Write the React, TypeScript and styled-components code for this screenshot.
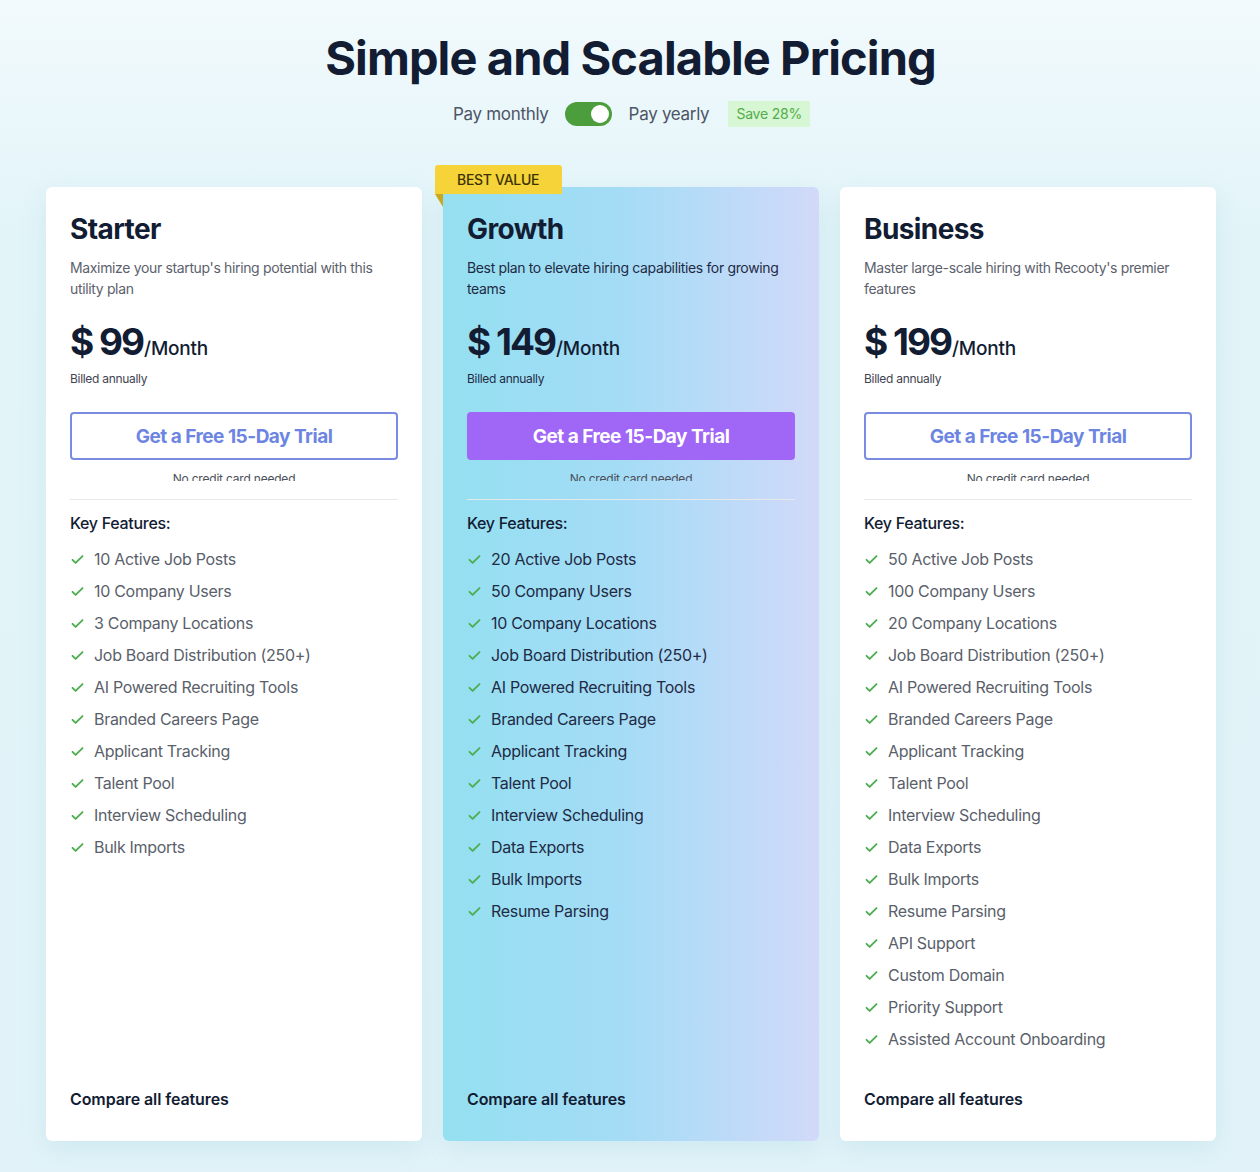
import React from "react";
import styled, { createGlobalStyle } from "styled-components";

const GlobalStyle = createGlobalStyle`
  html, body {
    margin: 0;
    padding: 0;
  }
  body {
    font-family: Inter, "Open Sans", sans-serif;
    background: linear-gradient(180deg, #f2fafd 0%, #e2f4f8 20%, #e1f3f8 100%);
    color: #121c33;
    -webkit-font-smoothing: antialiased;
  }
`;

type Plan = {
  name: string;
  description: string;
  price: number;
  features: string[];
  highlighted?: boolean;
};

const baseFeatures = [
  "Job Board Distribution (250+)",
  "AI Powered Recruiting Tools",
  "Branded Careers Page",
  "Applicant Tracking",
  "Talent Pool",
  "Interview Scheduling",
];

const plans: Plan[] = [
  {
    name: "Starter",
    description: "Maximize your startup's hiring potential with this utility plan",
    price: 99,
    features: [
      "10 Active Job Posts",
      "10 Company Users",
      "3 Company Locations",
      ...baseFeatures,
      "Bulk Imports",
    ],
  },
  {
    name: "Growth",
    description: "Best plan to elevate hiring capabilities for growing teams",
    price: 149,
    highlighted: true,
    features: [
      "20 Active Job Posts",
      "50 Company Users",
      "10 Company Locations",
      ...baseFeatures,
      "Data Exports",
      "Bulk Imports",
      "Resume Parsing",
    ],
  },
  {
    name: "Business",
    description: "Master large-scale hiring with Recooty's premier features",
    price: 199,
    features: [
      "50 Active Job Posts",
      "100 Company Users",
      "20 Company Locations",
      ...baseFeatures,
      "Data Exports",
      "Bulk Imports",
      "Resume Parsing",
      "API Support",
      "Custom Domain",
      "Priority Support",
      "Assisted Account Onboarding",
    ],
  },
];

const Page = styled.div`
  width: 1260px;
  min-height: 1172px;
  box-sizing: border-box;
  padding: 30px 45px 0 46px;
`;

const Title = styled.h1`
  margin: 0;
  text-align: center;
  font-size: 47px;
  line-height: 56px;
  font-weight: 700;
  letter-spacing: -0.9px;
  color: #121c33;
`;

const Toggle = styled.div`
  display: flex;
  align-items: center;
  justify-content: center;
  margin-top: 15px;
  margin-left: 2px;
`;

const ToggleLabel = styled.span`
  font-size: 17px;
  color: #4d5566;
  letter-spacing: -0.3px;
`;

const Switch = styled.div`
  width: 47px;
  height: 24px;
  border-radius: 12px;
  background: #4c9e3c;
  margin: 0 17px 0 16px;
  position: relative;
  &::after {
    content: "";
    position: absolute;
    right: 3px;
    top: 3px;
    width: 18px;
    height: 18px;
    border-radius: 50%;
    background: #ffffff;
  }
`;

const SaveBadge = styled.span`
  margin-left: 19px;
  padding: 0 8px;
  height: 26px;
  line-height: 26px;
  font-size: 14px;
  color: #52ad4a;
  background: #d7f6d3;
  letter-spacing: -0.2px;
`;

const Cards = styled.div`
  display: grid;
  grid-template-columns: repeat(3, 376px);
  column-gap: 21px;
  margin-top: 60px;
  align-items: stretch;
`;

const Card = styled.div<{ $highlighted?: boolean }>`
  position: relative;
  display: flex;
  flex-direction: column;
  padding: 25px 24px 32px;
  border-radius: 6px;
  background: ${(p) =>
    p.$highlighted
      ? "linear-gradient(90deg, #94e0f1 0%, #a3dcf5 45%, #b7dbf8 70%, #d2d9f9 100%)"
      : "#ffffff"};
  box-shadow: 0 8px 24px rgba(120, 190, 210, 0.18);
`;

const Ribbon = styled.div`
  position: absolute;
  top: -22px;
  left: -8px;
  height: 29px;
  padding: 0 23px 0 22px;
  display: flex;
  align-items: center;
  background: #f5d339;
  border-radius: 3px 3px 0 0;
  font-size: 14px;
  font-weight: 500;
  color: #3b3304;
  letter-spacing: -0.3px;
  &::after {
    content: "";
    position: absolute;
    left: 0;
    top: 29px;
    border-top: 13px solid #c9a81e;
    border-left: 8px solid transparent;
  }
`;

const PlanName = styled.h2`
  margin: 0;
  font-size: 28px;
  line-height: 34px;
  font-weight: 700;
  letter-spacing: -0.6px;
  color: #121c33;
`;

const Description = styled.p<{ $dark?: boolean }>`
  margin: 11px 0 0;
  font-size: 14px;
  line-height: 21px;
  letter-spacing: -0.35px;
  color: ${(p) => (p.$dark ? "#1f2a44" : "#5c616d")};
  padding-right: 8px;
`;

const PriceRow = styled.div`
  display: flex;
  align-items: baseline;
  margin-top: 20px;
  color: #121c33;
`;

const Amount = styled.span`
  font-size: 37px;
  line-height: 46px;
  font-weight: 700;
  letter-spacing: -2px;
`;

const Period = styled.span`
  margin-left: 1px;
  font-size: 19px;
  font-weight: 500;
  letter-spacing: -0.2px;
`;

const Billed = styled.div<{ $dark?: boolean }>`
  margin-top: 6px;
  font-size: 12px;
  line-height: 16px;
  letter-spacing: -0.3px;
  color: ${(p) => (p.$dark ? "#1f2a44" : "#3f4450")};
`;

const TrialButton = styled.button<{ $primary?: boolean }>`
  margin-top: 25px;
  height: 48px;
  width: 100%;
  border-radius: 4px;
  font-family: inherit;
  font-size: 19px;
  font-weight: 700;
  letter-spacing: -0.5px;
  cursor: pointer;
  border: 2px solid ${(p) => (p.$primary ? "#a066f6" : "#7a8ce0")};
  background: ${(p) => (p.$primary ? "#a066f6" : "#ffffff")};
  color: ${(p) => (p.$primary ? "#ffffff" : "#6d85e2")};
`;

const NoCard = styled.div`
  height: 10px;
  overflow: hidden;
  margin-top: 11px;
  text-align: center;
  font-size: 12px;
  line-height: 15px;
  letter-spacing: -0.2px;
  color: #4a4f5a;
`;

const Divider = styled.hr`
  margin: 18px 0 0;
  border: none;
  border-top: 1px solid #e6e8ec;
`;

const KeyHeading = styled.div`
  margin-top: 13px;
  font-size: 16px;
  line-height: 20px;
  font-weight: 500;
  letter-spacing: -0.3px;
  color: #121c33;
`;

const FeatureList = styled.ul`
  list-style: none;
  margin: 16px 0 0;
  padding: 0;
  display: flex;
  flex-direction: column;
  gap: 12px;
`;

const Feature = styled.li<{ $dark?: boolean }>`
  display: flex;
  align-items: center;
  gap: 9px;
  font-size: 16px;
  line-height: 20px;
  letter-spacing: -0.3px;
  color: ${(p) => (p.$dark ? "#1f2a44" : "#5a5f6b")};
`;

const Compare = styled.a`
  margin-top: auto;
  padding-top: 40px;
  font-size: 16px;
  line-height: 20px;
  font-weight: 600;
  letter-spacing: -0.1px;
  color: #121c33;
  text-decoration: none;
`;

const Check = () => (
  <svg width="15" height="15" viewBox="0 0 24 24" fill="none" stroke="#4caf50" strokeWidth="3" strokeLinecap="round" strokeLinejoin="round">
    <path d="M4 12.5l5 5L20 6.5" />
  </svg>
);

const PlanCard = ({ plan }: { plan: Plan }) => {
  const dark = plan.highlighted;
  return (
    <Card $highlighted={plan.highlighted}>
      {plan.highlighted && <Ribbon>BEST VALUE</Ribbon>}
      <PlanName>{plan.name}</PlanName>
      <Description $dark={dark}>{plan.description}</Description>
      <PriceRow>
        <Amount>$ {plan.price}</Amount>
        <Period>/Month</Period>
      </PriceRow>
      <Billed $dark={dark}>Billed annually</Billed>
      <TrialButton $primary={plan.highlighted}>Get a Free 15-Day Trial</TrialButton>
      <NoCard>No credit card needed</NoCard>
      <Divider />
      <KeyHeading>Key Features:</KeyHeading>
      <FeatureList>
        {plan.features.map((f) => (
          <Feature key={f} $dark={dark}>
            <Check />
            {f}
          </Feature>
        ))}
      </FeatureList>
      <Compare href="#">Compare all features</Compare>
    </Card>
  );
};

export default function App() {
  return (
    <>
      <GlobalStyle />
      <Page>
        <Title>Simple and Scalable Pricing</Title>
        <Toggle>
          <ToggleLabel>Pay monthly</ToggleLabel>
          <Switch />
          <ToggleLabel>Pay yearly</ToggleLabel>
          <SaveBadge>Save 28%</SaveBadge>
        </Toggle>
        <Cards>
          {plans.map((p) => (
            <PlanCard key={p.name} plan={p} />
          ))}
        </Cards>
      </Page>
    </>
  );
}
